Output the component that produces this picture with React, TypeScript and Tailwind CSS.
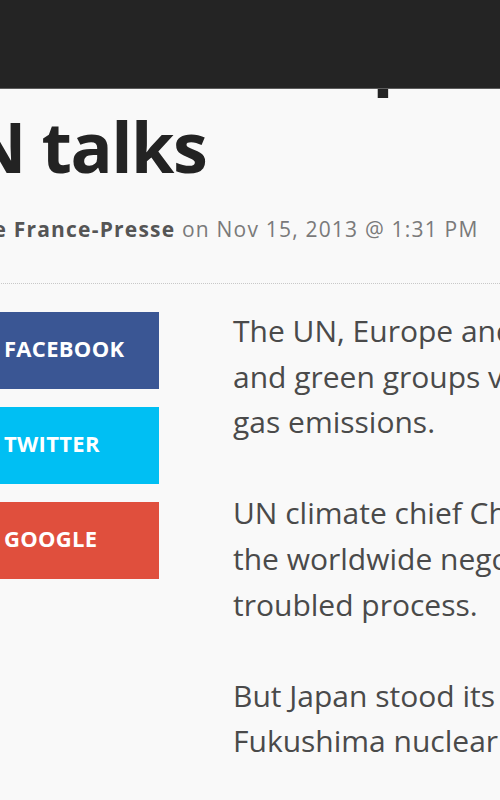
import React from "react";

export default function App() {
  return (
    <div className="relative w-[500px] h-[800px] overflow-hidden bg-[#f9f9f9] font-['Open_Sans',sans-serif]">
      <div className="absolute top-0 left-0 right-0 z-10 h-[89px] bg-[#242424] border-b border-[#5c5c5c]" />
      <div className="ml-[-100px] w-[900px]">
        <h1 className="pt-[8px] text-[70px] leading-[92px] font-bold tracking-[-1.5px] text-[#232323] whitespace-nowrap">
          <span className="flex justify-end w-[515px]">
            <span className="shrink-0">Japan's emissions U-turn shakes up</span>
          </span>
          <span className="block ml-[18px]">UN talks</span>
        </h1>
        <p className="mt-[22px] ml-[-9px] text-[21px] leading-[30px] tracking-[1.2px] text-[#7a7a7a] whitespace-nowrap">
          By <span className="font-bold text-[#555]">Agence France-Presse</span> on Nov 15, 2013 @ 1:31 PM
        </p>
        <div className="mt-[39px] border-t border-dotted border-[#c8c8c8]" />
        <div className="mt-[24px] flex gap-[74px]">
          <div className="w-[259px] shrink-0 mt-[4px] flex flex-col gap-[18px]">
            <a className="h-[77px] flex items-center pl-[104px] pb-[4px] bg-[#3a5694] text-white font-bold text-[22px] tracking-[0.3px] uppercase">Facebook</a>
            <a className="h-[77px] flex items-center pl-[104px] pb-[4px] bg-[#00bff3] text-white font-bold text-[22px] tracking-[0.3px] uppercase">Twitter</a>
            <a className="h-[77px] flex items-center pl-[104px] pb-[4px] bg-[#e04f3d] text-white font-bold text-[22px] tracking-[0.3px] uppercase">Google</a>
          </div>
          <div className="text-[30px] leading-[45.6px] text-[#4a4a4a] whitespace-nowrap">
            <p className="mb-[45.6px]">
              The UN, Europe and island states at risk from rising seas
              <br />
              and green groups voiced dismay on Friday at Japan's move to cut its greenhouse
              <br />
              gas emissions.
            </p>
            <p className="mb-[45.6px]">
              UN climate chief Christiana Figueres said the decision was disappointing as
              <br />
              the worldwide negotiations entered a critical phase in a long and
              <br />
              troubled process.
            </p>
            <p>
              But Japan stood its ground, saying the shutdown of its reactors after the
              <br />
              Fukushima nuclear accident had left it with no choice.
            </p>
          </div>
        </div>
      </div>
    </div>
  );
}
